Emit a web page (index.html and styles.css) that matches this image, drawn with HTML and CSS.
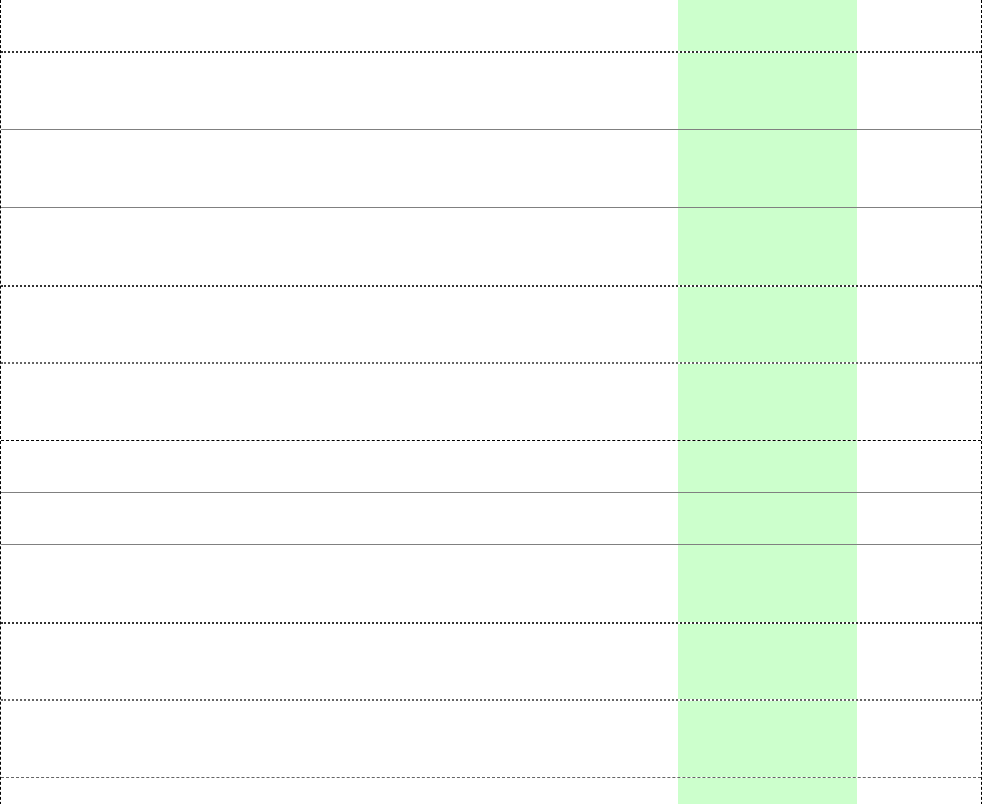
FILE: index.html
```html
<!DOCTYPE html>
<html>
<head>
<meta charset="utf-8">
<link rel="stylesheet" href="styles.css">
</head>
<body>
<div class="grid">
  <div class="row h51"><div class="cell"></div><div class="cell green"></div><div class="cell"></div></div>
  <div class="row h78 wavy"><div class="cell"></div><div class="cell green"></div><div class="cell"></div></div>
  <div class="row h78 solid"><div class="cell"></div><div class="cell green"></div><div class="cell"></div></div>
  <div class="row h78 solid"><div class="cell"></div><div class="cell green"></div><div class="cell"></div></div>
  <div class="row h77 wavy"><div class="cell"></div><div class="cell green"></div><div class="cell"></div></div>
  <div class="row h78 dotgray"><div class="cell"></div><div class="cell green"></div><div class="cell"></div></div>
  <div class="row h52 dashblack"><div class="cell"></div><div class="cell green"></div><div class="cell"></div></div>
  <div class="row h52 solid"><div class="cell"></div><div class="cell green"></div><div class="cell"></div></div>
  <div class="row h78 solid"><div class="cell"></div><div class="cell green"></div><div class="cell"></div></div>
  <div class="row h77 wavy"><div class="cell"></div><div class="cell green"></div><div class="cell"></div></div>
  <div class="row h78 dotgray"><div class="cell"></div><div class="cell green"></div><div class="cell"></div></div>
  <div class="row h78 dashgray"><div class="cell"></div><div class="cell green"></div><div class="cell"></div></div>
</div>
</body>
</html>
```

FILE: styles.css
```css
html, body {
  margin: 0;
  padding: 0;
  background: #fff;
  font-family: "Liberation Sans", Arial, sans-serif;
  overflow: hidden;
}
.grid {
  width: 982px;
  box-sizing: border-box;
  border-left: 1px dashed #000;
  border-right: 1px dashed #000;
}
.row {
  display: grid;
  grid-template-columns: 677px 179px 1fr;
  box-sizing: border-box;
}
.cell.green { background: #ccffcc; }
.h51 { height: 51px; }
.h52 { height: 52px; }
.h77 { height: 77px; }
.h78 { height: 78px; }
.wavy { border-top: 2px dotted #333; }
.solid { border-top: 1px solid #808080; }
.dotgray { border-top: 2px dotted #666; }
.dashblack { border-top: 1px dashed #000; }
.dashgray { border-top: 1px dashed #666; }
```
